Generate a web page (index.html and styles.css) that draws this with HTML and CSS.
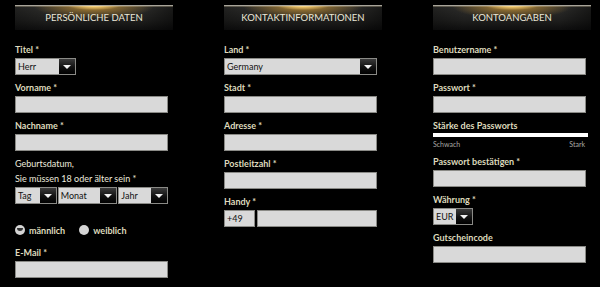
FILE: index.html
```html
<!DOCTYPE html>
<html lang="de">
<head>
    <meta charset="UTF-8">
    <title>Registrierung</title>
    <link rel="stylesheet" href="styles.css">
</head>
<body>
<main class="register">

    <section class="column">
        <h2 class="col-title">Persönliche Daten</h2>
        <div class="field">
            <label>Titel *</label>
            <div class="select select-title">
                <span class="select-value">Herr</span>
                <span class="arrow"></span>
            </div>
        </div>
        <div class="field">
            <label>Vorname *</label>
            <input type="text">
        </div>
        <div class="field">
            <label>Nachname *</label>
            <input type="text">
        </div>
        <div class="field">
            <label class="plain">Geburtsdatum,</label>
            <label class="second">Sie müssen 18 oder älter sein *</label>
            <div class="date-row">
                <div class="select select-day">
                    <span class="select-value">Tag</span>
                    <span class="arrow"></span>
                </div>
                <div class="select select-month">
                    <span class="select-value">Monat</span>
                    <span class="arrow"></span>
                </div>
                <div class="select select-year">
                    <span class="select-value">Jahr</span>
                    <span class="arrow"></span>
                </div>
            </div>
        </div>
        <div class="gender-row">
            <span class="radio checked"></span><span class="radio-label">männlich</span>
            <span class="radio"></span><span class="radio-label">weiblich</span>
        </div>
        <div class="field">
            <label>E-Mail *</label>
            <input type="text">
        </div>
    </section>

    <section class="column">
        <h2 class="col-title">Kontaktinformationen</h2>
        <div class="field">
            <label>Land *</label>
            <div class="select">
                <span class="select-value">Germany</span>
                <span class="arrow"></span>
            </div>
        </div>
        <div class="field">
            <label>Stadt *</label>
            <input type="text">
        </div>
        <div class="field">
            <label>Adresse *</label>
            <input type="text">
        </div>
        <div class="field">
            <label>Postleitzahl *</label>
            <input type="text">
        </div>
        <div class="field">
            <label>Handy *</label>
            <div class="phone-row">
                <input type="text" class="prefix" value="+49">
                <input type="text" class="number">
            </div>
        </div>
    </section>

    <section class="column">
        <h2 class="col-title">Kontoangaben</h2>
        <div class="field">
            <label>Benutzername *</label>
            <input type="text">
        </div>
        <div class="field">
            <label>Passwort *</label>
            <input type="text">
        </div>
        <div class="field strength">
            <label>Stärke des Passworts</label>
            <div class="strength-bar"></div>
            <div class="strength-legend">
                <span>Schwach</span>
                <span>Stark</span>
            </div>
        </div>
        <div class="field">
            <label>Passwort bestätigen *</label>
            <input type="text">
        </div>
        <div class="field">
            <label>Währung *</label>
            <div class="select select-currency">
                <span class="select-value">EUR</span>
                <span class="arrow"></span>
            </div>
        </div>
        <div class="field">
            <label>Gutscheincode</label>
            <input type="text">
        </div>
    </section>

</main>
</body>
</html>
```

FILE: styles.css
```css
body {
    margin: 0;
    background-color: #000;
    font-family: Lato, "Noto Sans", sans-serif;
    color: #dedabd;
}
.register {
    display: grid;
    grid-template-columns: 158px 158px 158px;
    column-gap: 51px;
    padding: 5px 0 0 15px;
}
.column {
    width: 158px;
}
.col-title {
    margin: 0 0 14px 0;
    height: 24px;
    line-height: 24px;
    font-size: 9.5px;
    font-weight: 400;
    text-transform: uppercase;
    text-align: center;
    color: #ece8d8;
    border-top: 1px solid #a8a49a;
    background:
        radial-gradient(ellipse 26px 4px at 50% 0, rgba(255, 215, 120, 1), rgba(240, 180, 70, 0) 100%),
        radial-gradient(ellipse 60px 13px at 50% 0, rgba(210, 155, 55, 0.85), rgba(0, 0, 0, 0) 100%),
        linear-gradient(to right, rgba(0, 0, 0, 0.25), rgba(0, 0, 0, 0) 20%, rgba(0, 0, 0, 0) 80%, rgba(0, 0, 0, 0.45)),
        linear-gradient(to bottom, #2e2e2c, #1e1e1d 60%, #0e0e0e);
    box-shadow: inset 0 1px 0 rgba(255, 240, 200, 0.25);
}
.field {
    margin-bottom: 7px;
    width: 153px;
}
label {
    display: block;
    font-size: 9px;
    font-weight: 700;
    line-height: 12px;
    margin-bottom: 2px;
}
label.plain {
    font-weight: 400;
    color: #eceade;
    margin-bottom: 3px;
}
label.second {
    font-weight: 400;
    color: #eceade;
}
input[type="text"] {
    display: block;
    box-sizing: border-box;
    width: 153px;
    height: 17px;
    margin: 0;
    padding: 0 3px;
    border: 1px solid #8a8a86;
    background-color: #d9d9d9;
    font-family: inherit;
    font-size: 9px;
    color: #111;
}
.select {
    display: flex;
    box-sizing: border-box;
    height: 17px;
    width: 153px;
    border: 1px solid #8a8a86;
    background-color: #d9d9d9;
}
.select-value {
    flex: 1;
    padding-left: 2px;
    font-size: 9px;
    line-height: 15px;
    color: #111;
}
.arrow {
    width: 16px;
    background: linear-gradient(to bottom, #3a3a3a, #111 55%, #000);
    position: relative;
}
.arrow::after {
    content: "";
    position: absolute;
    left: 4px;
    top: 6px;
    border-left: 4px solid transparent;
    border-right: 4px solid transparent;
    border-top: 4px solid #f2f2f2;
}
.select-title {
    width: 61px;
}
.select-currency {
    width: 40px;
}
.date-row {
    display: flex;
    gap: 1px;
}
.select-day {
    width: 42px;
}
.select-month {
    width: 60px;
}
.select-year {
    width: 50px;
}
.gender-row {
    display: flex;
    align-items: center;
    margin: 21px 0 12px 0;
    font-size: 9px;
    font-weight: 700;
    height: 10px;
}
.radio {
    width: 10px;
    height: 10px;
    border-radius: 50%;
    background-color: #d4d4d4;
    position: relative;
    margin-right: 4px;
}
.radio.checked::after {
    content: "";
    position: absolute;
    left: 2px;
    top: 3px;
    width: 6px;
    height: 3px;
    border-radius: 3px 3px 0 0;
    background-color: #333;
    transform: rotate(180deg);
}
.radio-label {
    margin-right: 14px;
}
.phone-row {
    display: flex;
    gap: 2px;
}
.phone-row .prefix {
    width: 31px;
    padding-left: 2px;
}
.phone-row .number {
    width: 120px;
}
.strength label {
    margin-bottom: 1px;
}
.strength-bar {
    width: 155px;
    height: 4px;
    background-color: #fff;
}
.strength-legend {
    display: flex;
    justify-content: space-between;
    font-size: 7px;
    color: #a8a8a4;
    margin-top: 2px;
    width: 152px;
    line-height: 10px;
    margin-bottom: 6px;
}
```
